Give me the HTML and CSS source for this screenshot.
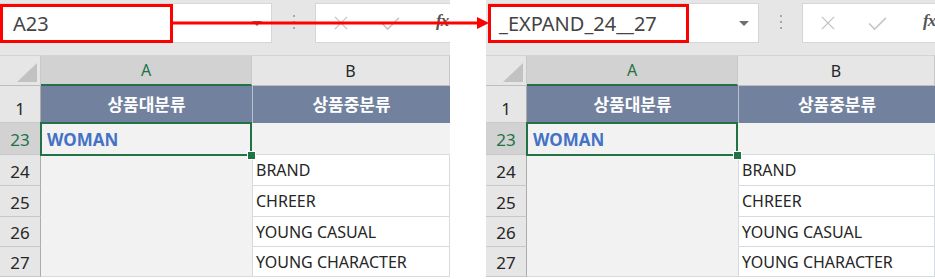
FILE: index.html
```html
<!DOCTYPE html>
<html lang="ko">
<head>
  <meta charset="UTF-8">
  <title>이름 상자</title>
  <link rel="stylesheet" href="styles.css">
</head>
<body>
<div class="stage">

  <div class="panel panel-left">
    <div class="toolbar">
      <div class="namebox">
        <div class="name">A23</div>
        <span class="drop"></span>
      </div>
      <div class="dots"><i></i><i></i><i></i></div>
      <div class="fbox">
        <svg class="ico ico-x" viewBox="0 0 16 16"><path d="M1 1 L15 15 M15 1 L1 15"></path></svg>
        <svg class="ico ico-ok" viewBox="0 0 20 16"><path d="M1 8 L7 14 L19 2"></path></svg>
        <span class="fx">fx</span>
      </div>
    </div>
    <div class="sheet">
      <div class="corner"><span class="tri"></span></div>
      <div class="colhead colhead-on">A</div>
      <div class="colhead">B</div>

      <div class="rowhead rowhead-top">1</div>
      <div class="title">상품대분류</div>
      <div class="title title-b">상품중분류</div>

      <div class="rowhead rowhead-on">23</div>
      <div class="cell cell-sel">WOMAN<span class="handle"></span></div>
      <div class="cell cell-grey"></div>

      <div class="rowhead">24</div>
      <div class="cell cell-blank"></div>
      <div class="cell cell-b">BRAND</div>
      <div class="rowhead">25</div>
      <div class="cell cell-b">CHREER</div>
      <div class="rowhead">26</div>
      <div class="cell cell-b">YOUNG CASUAL</div>
      <div class="rowhead">27</div>
      <div class="cell cell-b">YOUNG CHARACTER</div>
    </div>
  </div>

  <div class="panel panel-right">
    <div class="toolbar">
      <div class="namebox">
        <div class="name">_EXPAND_24__27</div>
        <span class="drop"></span>
      </div>
      <div class="dots"><i></i><i></i><i></i></div>
      <div class="fbox">
        <svg class="ico ico-x" viewBox="0 0 16 16"><path d="M1 1 L15 15 M15 1 L1 15"></path></svg>
        <svg class="ico ico-ok" viewBox="0 0 20 16"><path d="M1 8 L7 14 L19 2"></path></svg>
        <span class="fx">fx</span>
      </div>
    </div>
    <div class="sheet">
      <div class="corner"><span class="tri"></span></div>
      <div class="colhead colhead-on">A</div>
      <div class="colhead">B</div>

      <div class="rowhead rowhead-top">1</div>
      <div class="title">상품대분류</div>
      <div class="title title-b">상품중분류</div>

      <div class="rowhead rowhead-on">23</div>
      <div class="cell cell-sel">WOMAN<span class="handle"></span></div>
      <div class="cell cell-grey"></div>

      <div class="rowhead">24</div>
      <div class="cell cell-blank"></div>
      <div class="cell cell-b">BRAND</div>
      <div class="rowhead">25</div>
      <div class="cell cell-b">CHREER</div>
      <div class="rowhead">26</div>
      <div class="cell cell-b">YOUNG CASUAL</div>
      <div class="rowhead">27</div>
      <div class="cell cell-b">YOUNG CHARACTER</div>
    </div>
  </div>

  <!-- red pointer from the first name box to the second -->
  <svg class="arrow" viewBox="0 0 935 50">
    <line x1="172" y1="23" x2="479" y2="23" stroke="#ff0000" stroke-width="3"></line>
    <polygon points="477,17 489,23 477,29" fill="#ff0000"></polygon>
  </svg>
</div>
</body>
</html>
```

FILE: styles.css
```css
* {
  box-sizing: border-box;
}

body {
  margin: 0;
  background: #fff;
  font-family: "Noto Sans", "Noto Sans CJK KR", sans-serif;
  color: #262626;
  overflow: hidden;
}

.stage {
  position: relative;
  display: flex;
  gap: 36px;
  width: 935px;
  height: 279px;
}

.panel {
  overflow: hidden;
  height: 278px;
  flex: none;
}

.panel-left {
  width: 450px;
}

.panel-right {
  width: 449px;
}

/* formula bar */
.toolbar {
  display: flex;
  align-items: flex-start;
  height: 55px;
  padding-top: 3px;
  background: #e6e6e6;
}

.namebox {
  display: flex;
  align-items: center;
  flex: none;
  width: 272px;
  height: 40px;
  background: #fff;
  border: 1px solid #d6d6d6;
  border-left: 0;
}

.panel-right .namebox {
  width: 271px;
  margin-left: 2px;
  border-left: 1px solid #d6d6d6;
}

.name {
  align-self: stretch;
  width: 173px;
  margin: 0 0 -1px 0;
  padding: 3px 0 0 10px;
  border: 3px solid #ff0000;
  font-size: 20px;
  line-height: 28px;
  color: #444;
  white-space: nowrap;
}

.panel-right .name {
  width: 201px;
  margin-left: -1px;
  padding-left: 8px;
}

.drop {
  margin-left: auto;
  margin-right: 9px;
  width: 0;
  height: 0;
  border-left: 5px solid transparent;
  border-right: 5px solid transparent;
  border-top: 5px solid #6e6e6e;
}

.dots {
  display: flex;
  flex: none;
  flex-direction: column;
  align-items: center;
  gap: 4px;
  width: 43px;
  padding-top: 12px;
}

.dots i {
  width: 2px;
  height: 2px;
  background: #a6a6a6;
}

.fbox {
  position: relative;
  flex: none;
  width: 180px;
  height: 40px;
  background: #fff;
  border: 1px solid #d6d6d6;
}

.ico {
  position: absolute;
  fill: none;
  stroke: #c4c4c4;
  stroke-width: 1.6;
}

.ico-x {
  left: 18px;
  top: 12px;
  width: 14px;
  height: 14px;
}

.ico-ok {
  left: 65px;
  top: 12px;
  width: 19px;
  height: 15px;
}

.fx {
  position: absolute;
  left: 120px;
  top: 7px;
  font-family: "Liberation Serif", serif;
  font-style: italic;
  font-weight: bold;
  font-size: 17px;
  letter-spacing: -1px;
  color: #555;
}

/* sheet grid */
.sheet {
  display: grid;
  grid-template-columns: 41px 211px 1fr;
  grid-template-rows: 31px 37px 32px 31px 31px 30px 30px;
}

.corner {
  position: relative;
  background: #e6e6e6;
  border-top: 1px solid #d4d4d4;
  border-right: 1px solid #c8c8c8;
  border-bottom: 1px solid #bdbdbd;
}

.tri {
  position: absolute;
  right: 3px;
  bottom: 3px;
  width: 0;
  height: 0;
  border-left: 20px solid transparent;
  border-bottom: 19px solid #c2c2c2;
}

.colhead {
  display: flex;
  align-items: center;
  justify-content: center;
  background: #e6e6e6;
  border-top: 1px solid #d4d4d4;
  border-right: 1px solid #c8c8c8;
  border-bottom: 1px solid #bdbdbd;
  font-size: 16px;
  color: #262626;
}

.colhead-on {
  background: #d2d2d2;
  border-bottom: 2px solid #217346;
  color: #217346;
}

.rowhead {
  display: flex;
  align-items: center;
  justify-content: center;
  padding-top: 2px;
  background: #e6e6e6;
  border-right: 1px solid #acacac;
  border-bottom: 1px solid #c8c8c8;
  font-size: 17px;
  color: #262626;
}

.rowhead-top {
  padding-top: 8px;
}

.rowhead-on {
  background: #d2d2d2;
  color: #217346;
}

.title {
  display: flex;
  align-items: center;
  justify-content: center;
  padding-bottom: 2px;
  background: #72829e;
  font-weight: bold;
  font-size: 17px;
  color: #fff;
}

.title-b {
  border-left: 1px solid #b7c0cf;
}

.cell {
  display: flex;
  align-items: center;
  padding-left: 3px;
  font-size: 16px;
  white-space: nowrap;
}

.cell-sel {
  position: relative;
  padding-left: 5px;
  background: #f2f2f2;
  border: 2px solid #217346;
  margin: -1px 0 -1px -1px;
  font-weight: bold;
  font-size: 17px;
  color: #4472c4;
}

.handle {
  position: absolute;
  right: -6px;
  bottom: -6px;
  width: 9px;
  height: 9px;
  background: #217346;
  border: 1px solid #fff;
}

.cell-grey {
  background: #f2f2f2;
  border-bottom: 1px solid #d6dae1;
}

.cell-blank {
  grid-row: span 4;
  background: #f2f2f2;
  border-bottom: 1px solid #d6dae1;
}

.cell-b {
  background: #fff;
  border-left: 1px solid #d6dae1;
  border-right: 1px solid #d6dae1;
  border-bottom: 1px solid #d6dae1;
}

.arrow {
  position: absolute;
  left: 0;
  top: 0;
  width: 935px;
  height: 50px;
  pointer-events: none;
}
```
